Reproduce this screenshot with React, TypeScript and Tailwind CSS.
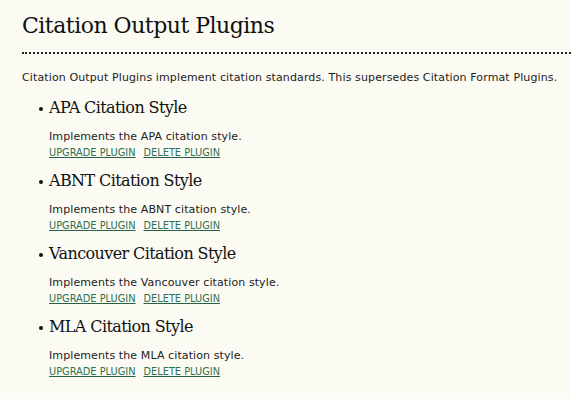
import React from "react";

const items = ["APA", "ABNT", "Vancouver", "MLA"];

export default function App() {
  return (
    <div className="min-h-[399px] w-[571px] bg-[#fbfbf3] pl-[22px] pt-[11px] text-[#222]" style={{ fontFamily: '"DejaVu Sans", Verdana, sans-serif' }}>
      <h2
        className="border-b-2 border-dotted border-[#222] pb-[11px] text-[22px] leading-[30px] tracking-[-0.5px] text-[#111]"
        style={{ fontFamily: '"DejaVu Serif", Georgia, serif' }}
      >
        Citation Output Plugins
      </h2>
      <p className="mt-[17px] text-[11px] leading-[14px] tracking-[0.12px]">
        Citation Output Plugins implement citation standards. This supersedes Citation Format Plugins.
      </p>
      <ul className="mt-[12px] pl-[27px]">
        {items.map((n) => (
          <li key={n} className="mb-[11px]">
            <div className="flex items-center">
              <span className="-ml-[10px] mr-[6px] mt-[2px] h-[4px] w-[4px] rounded-full bg-[#111]" />
              <h4
                className="text-[16px] leading-[22px] tracking-[-0.6px] text-[#111]"
                style={{ fontFamily: '"DejaVu Serif", Georgia, serif' }}
              >
                {n} Citation Style
              </h4>
            </div>
            <p className="mt-[11px] text-[11px] leading-[14px] tracking-[0.1px]">Implements the {n} citation style.</p>
            <div className="mt-[2px] flex gap-[8px] text-[9.8px] leading-[13px]">
              <a href="#" className="text-[#2f7052] underline decoration-[#2a6048]">UPGRADE PLUGIN</a>
              <a href="#" className="text-[#2f7052] underline decoration-[#2a6048]">DELETE PLUGIN</a>
            </div>
          </li>
        ))}
      </ul>
    </div>
  );
}
